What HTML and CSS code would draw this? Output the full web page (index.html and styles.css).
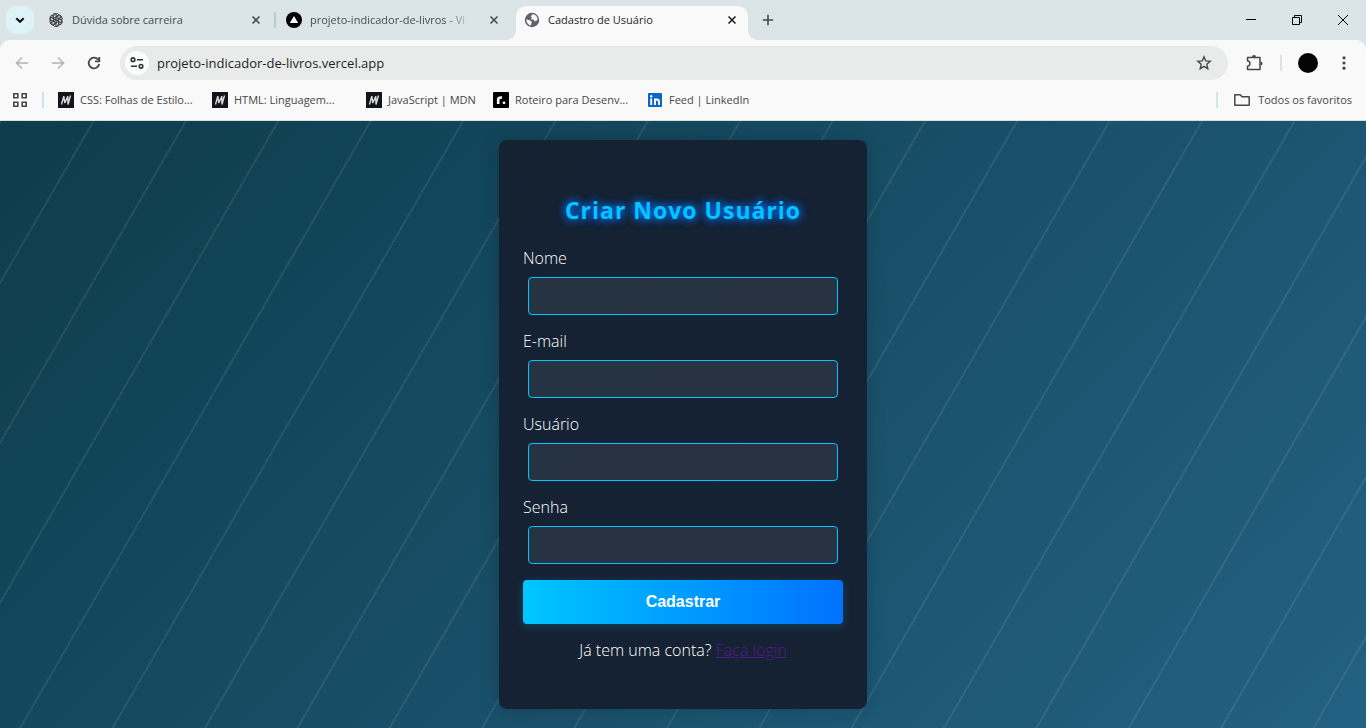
FILE: index.html
```html
<!DOCTYPE html>
<html lang="pt-BR">
<head>
<meta charset="utf-8">
<title>Cadastro de Usuário</title>
<link rel="stylesheet" href="styles.css">
</head>
<body>
<svg width="0" height="0" class="defs" aria-hidden="true">
  <symbol id="close" viewBox="0 0 16 16"><path d="M4.500 4.500l7 7m0-7l-7 7" fill="none" stroke="currentColor" stroke-width="1.600"/></symbol>
  <symbol id="mdn" viewBox="0 0 16 16"><rect width="16" height="16" fill="#14141c"/><path d="M3.500 12.500L5.800 4.200L6.800 11L9.800 4.200L10 12.500L12.500 3.500" fill="none" stroke="#dcdcdc" stroke-width="1.400" stroke-linejoin="bevel"/></symbol>
</svg>

<header class="browser">
  <div class="tabstrip">
    <button class="tab-search" aria-label="Pesquisar guias"><svg width="16" height="16" viewBox="0 0 16 16"><path d="M4.300 6.200L8 9.800l3.700-3.600" fill="none" stroke="#111" stroke-width="2"/></svg></button>
    <div class="tabs">
      <div class="tab">
        <svg class="icon" viewBox="0 0 16 16" fill="none" stroke="#3c4043" stroke-width="1">
          <path id="petal" d="M5.500 9.500V4.300A2.900 2.900 0 0 1 10.800 2.900L7.800 4.700V8M10.800 2.900A2.900 2.900 0 0 1 13.500 4.900L10.200 6.800"/>
          <use href="#petal" transform="rotate(60 8 8)"/><use href="#petal" transform="rotate(120 8 8)"/><use href="#petal" transform="rotate(180 8 8)"/><use href="#petal" transform="rotate(240 8 8)"/><use href="#petal" transform="rotate(300 8 8)"/>
        </svg>
        <span class="tab-title">Dúvida sobre carreira</span>
        <button class="tab-close" aria-label="Fechar guia"><svg class="icon"><use href="#close"/></svg></button>
      </div>
      <span class="tab-divider"></span>
      <div class="tab">
        <svg class="icon" viewBox="0 0 16 16"><circle cx="8" cy="8" r="8"/><path d="M8 4l4.200 7H3.800z" fill="#fff"/></svg>
        <span class="tab-title fade">projeto-indicador-de-livros - Vi</span>
        <button class="tab-close" aria-label="Fechar guia"><svg class="icon"><use href="#close"/></svg></button>
      </div>
      <span class="tab-divider hidden"></span>
      <div class="tab active">
        <svg class="icon" viewBox="0 0 16 16"><circle cx="8" cy="8" r="7.200" fill="#5f6368"/><path d="M8.800 2.300L6.700 4.300L8 6L6.500 7.600H9.500L11 9.500L13.500 8C13.700 5 11.800 2.600 8.800 2.300M2.400 7.300L6.700 8.800L8 10.500L7 11.800L7.300 13.600C4.500 13.300 2.200 10.700 2.400 7.300" fill="#f9f9f9"/></svg>
        <span class="tab-title">Cadastro de Usuário</span>
        <button class="tab-close" aria-label="Fechar guia"><svg class="icon"><use href="#close"/></svg></button>
      </div>
    </div>
    <button class="new-tab" aria-label="Nova guia"><svg class="icon" viewBox="0 0 16 16"><path d="M8 2.800v10.400M2.800 8h10.400" stroke="#3c4a4f" stroke-width="1.600"/></svg></button>
    <div class="window-buttons">
      <button aria-label="Minimizar"><svg width="12" height="12" viewBox="0 0 12 12"><path d="M1 5.500h10" stroke="#000"/></svg></button>
      <button aria-label="Restaurar"><svg width="12" height="12" viewBox="0 0 12 12" fill="none" stroke="#000"><path d="M1.500 3.500h7v7h-7zM3.500 3.500v-2h7v7h-2"/></svg></button>
      <button aria-label="Fechar"><svg width="12" height="12" viewBox="0 0 12 12"><path d="M1 1l10 10M11 1L1 11" stroke="#000"/></svg></button>
    </div>
  </div>

  <div class="toolbar">
    <button class="tool dim" aria-label="Voltar"><svg class="icon" viewBox="0 0 16 16"><path d="M14 8H2.800M8 2.500L2.500 8L8 13.500"/></svg></button>
    <button class="tool dim" aria-label="Avançar"><svg class="icon" viewBox="0 0 16 16"><path d="M2 8h11.200M8 2.500L13.500 8L8 13.500"/></svg></button>
    <button class="tool" aria-label="Recarregar"><svg class="icon" viewBox="0 0 16 16"><path d="M12.200 4.800A5.300 5.300 0 1 0 13.200 9M13.300 2v4.300H9" stroke-width="1.800"/></svg></button>
    <div class="omnibox">
      <button class="site-info" aria-label="Informações do site"><svg class="icon" viewBox="0 0 16 16" fill="none" stroke="#303436" stroke-width="1.600"><circle cx="4" cy="4.700" r="1.800"/><path d="M8 4.700h6M2 11.300h6"/><circle cx="12" cy="11.300" r="1.800"/></svg></button>
      <input class="url" aria-label="Endereço" value="projeto-indicador-de-livros.vercel.app">
      <button class="star" aria-label="Favoritar"><svg class="icon" viewBox="0 0 16 16"><path d="M8 1.800l1.700 4.100 4.500.4-3.400 3 1 4.400L8 11.400l-3.800 2.300 1-4.400-3.400-3 4.500-.4z" fill="none" stroke="#474747" stroke-width="1.400"/></svg></button>
    </div>
    <button class="tool ext" aria-label="Extensões"><svg width="18" height="18" viewBox="0 0 18 18"><path d="M2.500 3.500H15V15.500H2.500V12.300C5.800 11.500 5.800 7.500 2.500 6.700Z" stroke-linejoin="round"/><path d="M7 3a2 2 0 0 1 4 0zM15.500 7.500a2 2 0 0 1 0 4z" fill="#474747" stroke="none"/></svg></button>
    <span class="divider"></span>
    <button class="avatar" aria-label="Perfil"></button>
    <button class="tool menu" aria-label="Menu"><svg class="icon" viewBox="0 0 16 16"><g fill="#474747" stroke="none"><circle cx="8" cy="2.800" r="1.600"/><circle cx="8" cy="8" r="1.600"/><circle cx="8" cy="13.200" r="1.600"/></g></svg></button>
  </div>

  <nav class="bookmarks">
    <button class="apps" aria-label="Apps"><svg class="icon" viewBox="0 0 16 16" fill="none" stroke="#474747" stroke-width="1.600"><path d="M1.800 1.800h4v4h-4zM10.200 1.800h4v4h-4zM1.800 10.200h4v4h-4zM10.200 10.200h4v4h-4z"/></svg></button>
    <span class="divider"></span>
    <div class="links">
      <a class="bookmark wide" href="#"><svg class="icon"><use href="#mdn"/></svg><span>CSS: Folhas de Estilo...</span></a>
      <a class="bookmark wide" href="#"><svg class="icon"><use href="#mdn"/></svg><span>HTML: Linguagem...</span></a>
      <a class="bookmark" href="#"><svg class="icon"><use href="#mdn"/></svg><span>JavaScript | MDN</span></a>
      <a class="bookmark wide" href="#"><svg class="icon" viewBox="0 0 16 16"><rect width="16" height="16" rx="1"/><path d="M5.200 12V7.500Q5.200 5.300 9 5.500" fill="none" stroke="#fff" stroke-width="2.600"/><circle cx="11" cy="10.800" r="1.400" fill="#fff"/></svg><span>Roteiro para Desenv...</span></a>
      <a class="bookmark" href="#"><svg class="icon" viewBox="0 0 16 16"><rect x="1" y="1" width="14" height="14" rx="1" fill="#0a66c2"/><path d="M4.200 6.500V13M8 6.500V13M8 9.500Q8.200 7.500 10 7.500T12 9.500V13" fill="none" stroke="#fff" stroke-width="1.900"/><circle cx="4.200" cy="4.200" r="1.200" fill="#fff"/></svg><span>Feed | LinkedIn</span></a>
    </div>
    <span class="divider"></span>
    <a class="bookmark all" href="#"><svg class="icon" viewBox="0 0 16 16"><path d="M.8 2.800H6.200L8 4.700H15.200V13.200H.8z" fill="none" stroke="#474747" stroke-width="1.500" stroke-linejoin="round"/></svg><span>Todos os favoritos</span></a>
  </nav>
</header>

<main class="page">
  <form class="card">
    <h2>Criar Novo Usuário</h2>
    <div class="field"><label for="nome">Nome</label><input id="nome" type="text"></div>
    <div class="field"><label for="email">E-mail</label><input id="email" type="email"></div>
    <div class="field"><label for="usuario">Usuário</label><input id="usuario" type="text"></div>
    <div class="field"><label for="senha">Senha</label><input id="senha" type="password"></div>
    <button class="submit" type="button">Cadastrar</button>
    <p class="login">Já tem uma conta? <a href="#">Faça login</a></p>
  </form>
</main>
</body>
</html>
```

FILE: styles.css
```css
* {
  box-sizing: border-box;
}

body {
  margin: 0;
  min-height: 100vh;
  display: flex;
  flex-direction: column;
  font-family: "Open Sans", "Noto Sans", sans-serif;
}

button {
  display: flex;
  align-items: center;
  justify-content: center;
  padding: 0;
  border: 0;
  background: none;
}

.defs {
  position: absolute;
}

.icon {
  flex: none;
  width: 16px;
  height: 16px;
}

/* Browser frame */
.browser {
  background: #dbe4e6;
  font-size: 11px;
  color: #474747;
}

.tabstrip {
  display: flex;
  align-items: center;
  height: 40px;
  padding-left: 6px;
}

.tab-search {
  width: 28px;
  height: 28px;
  margin-right: 6px;
  border-radius: 10px;
  background: #def3f8;
}

.tabs {
  display: flex;
  align-items: center;
}

.tab {
  position: relative;
  display: flex;
  align-items: center;
  gap: 8px;
  width: 232px;
  height: 34px;
  margin-top: 6px;
  padding: 0 8px 6px;
  color: #474e50;
}

.tab-title {
  flex: 1;
  padding-bottom: 2px;
  white-space: nowrap;
}

.fade {
  mask-image: linear-gradient(90deg, #000 80%, transparent 98%);
}

.tab-close {
  color: #474e50;
}

.tab-divider {
  width: 2px;
  height: 16px;
  margin: 0 2px;
  background: #b5cdd2;
}

.hidden {
  visibility: hidden;
}

.active {
  border-radius: 10px 10px 0 0;
  background: #f9f9f9;
  color: #1f1f1f;
}

.active .tab-close {
  color: #1f1f1f;
}

.active::before,
.active::after {
  content: "";
  position: absolute;
  bottom: 0;
  width: 10px;
  height: 10px;
}

.active::before {
  right: 100%;
  background: radial-gradient(circle at 0 0, transparent 10px, #f9f9f9 10px);
}

.active::after {
  left: 100%;
  background: radial-gradient(circle at 100% 0, transparent 10px, #f9f9f9 10px);
}

.new-tab {
  width: 28px;
  height: 28px;
  margin-left: 6px;
}

.window-buttons {
  display: flex;
  margin-left: auto;
}

.window-buttons button {
  width: 46px;
  height: 40px;
}

.toolbar {
  display: flex;
  align-items: center;
  height: 40px;
  padding: 6px 6px 0 4px;
  border-radius: 10px 10px 0 0;
  background: #f9f9f9;
}

.tool {
  width: 36px;
  height: 34px;
}

.tool svg {
  fill: none;
  stroke: #474747;
  stroke-width: 1.5px;
}

.dim svg {
  stroke: #b1b3b3;
}

.omnibox {
  flex: 1;
  display: flex;
  align-items: center;
  height: 34px;
  margin-left: 8px;
  padding: 0 16px 0 5px;
  border-radius: 17px;
  background: #e8ebea;
}

.site-info {
  width: 24px;
  height: 24px;
  border-radius: 50%;
  background: #fbfcfc;
}

.url {
  flex: 1;
  margin-left: 8px;
  padding: 0;
  border: 0;
  background: none;
  color: #1f1f1f;
  font: 13px "Open Sans", "Noto Sans", sans-serif;
}

.ext {
  margin: 0 8px;
}

.divider {
  width: 2px;
  height: 16px;
  background: #cfe6ea;
}

.avatar {
  width: 20px;
  height: 20px;
  margin: 0 8px 0 16px;
  border-radius: 50%;
  background: #050506;
}

.menu {
  width: 32px;
  margin-left: 2px;
}

.bookmarks {
  display: flex;
  align-items: center;
  height: 41px;
  padding: 0 14px 0 12px;
  border-bottom: 1px solid #dcdede;
  background: #f9f9f9;
}

.apps {
  margin-right: 14px;
}

.links {
  display: flex;
  flex: 1;
  margin-left: 14px;
}

.bookmark {
  display: flex;
  align-items: center;
  gap: 6px;
  min-width: 127px;
  color: #474747;
  text-decoration: none;
  white-space: nowrap;
}

.bookmark span {
  padding-bottom: 2px;
}

.wide {
  min-width: 154px;
}

.all {
  gap: 8px;
  min-width: 0;
  margin-left: 16px;
}

/* Sign-up page */
.page {
  flex: 1;
  display: flex;
  align-items: center;
  justify-content: center;
  background:
    repeating-linear-gradient(120deg, rgba(255, 255, 255, 0.08) 0 2px, transparent 2px 80px),
    linear-gradient(135deg, #0d3c4c, #236182);
}

.card {
  width: 368px;
  padding: 50px 24px 48px;
  border-radius: 8px;
  background: rgba(21, 32, 49, 0.96);
  box-shadow: 0 0 20px rgba(0, 0, 0, 0.2);
  color: #fff;
  font-size: 16px;
  font-weight: 300;
  line-height: 21px;
}

.card h2 {
  margin: 0 0 18px;
  color: #00c6ff;
  font-size: 23px;
  font-weight: 700;
  line-height: 40px;
  letter-spacing: 1px;
  text-align: center;
  text-shadow: 0 0 10px #0072ff, 0 0 8px #0072ff;
}

.field {
  display: flex;
  flex-direction: column;
  gap: 8px;
  margin-bottom: 16px;
}

.field input {
  height: 38px;
  margin: 0 5px;
  padding: 0 10px;
  border: 1px solid #00c6ff;
  border-radius: 4px;
  background: rgba(255, 255, 255, 0.08);
  color: #fff;
  font-size: 16px;
}

.submit {
  width: 100%;
  height: 44px;
  border-radius: 4px;
  background: linear-gradient(90deg, #00c6ff, #0072ff);
  box-shadow: 0 2px 10px rgba(0, 198, 255, 0.2);
  color: #fff;
  font: bold 16px "Liberation Sans", Arial, sans-serif;
}

.login {
  margin: 16px 0 0;
  text-align: center;
}

.login a {
  color: #551a8b;
}
```
